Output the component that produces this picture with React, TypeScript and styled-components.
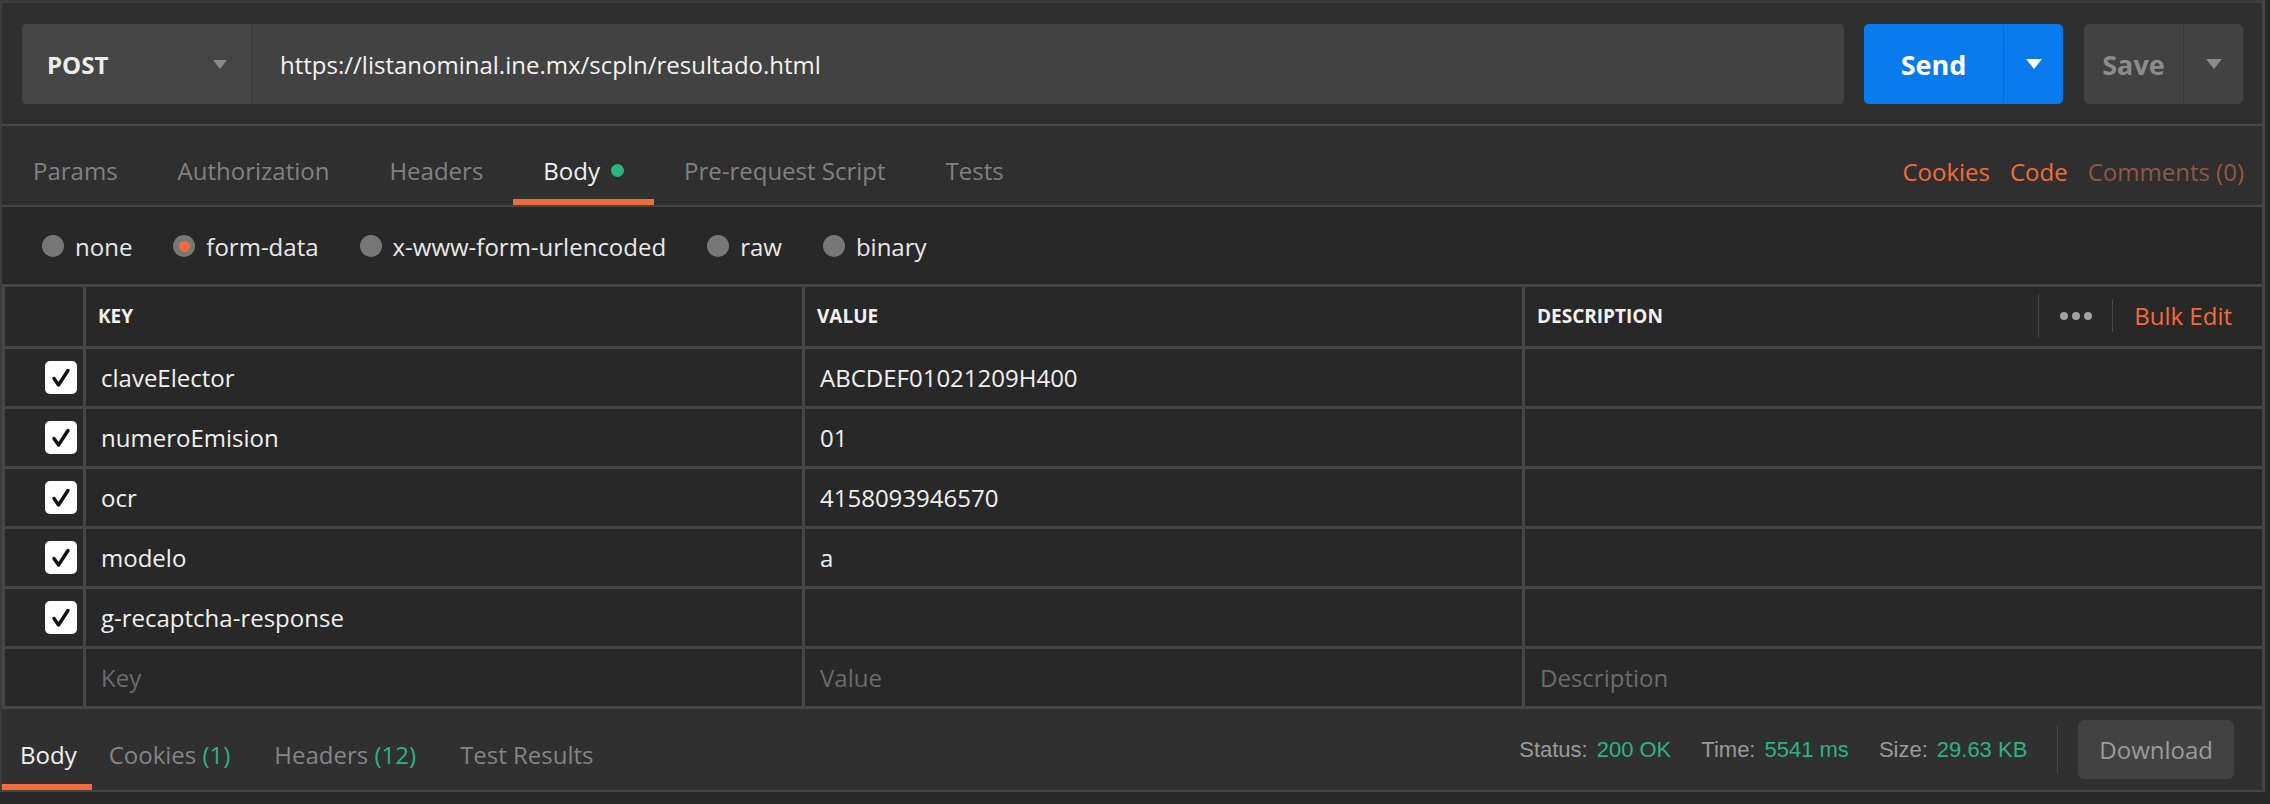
import styled, { createGlobalStyle } from 'styled-components'

const GlobalStyle = createGlobalStyle`
  html, body {
    margin: 0;
    padding: 0;
    background: #282828;
  }
  body {
    font-family: 'Open Sans', 'Noto Sans', sans-serif;
  }
  * {
    box-sizing: border-box;
  }
`

const ORANGE = '#f26b3a'
const GREEN = '#2bb381'

const Page = styled.div`
  width: 2270px;
  height: 804px;
  background: #282828;
  overflow: hidden;
`

const Panel = styled.div`
  width: 2265px;
  border-left: 2px solid #3c3c3c;
  border-right: 3px solid #454545;
`

/* ---------- request bar ---------- */

const TopBar = styled.div`
  height: 126px;
  display: flex;
  align-items: flex-start;
  padding: 21px 19px 0 20px;
  background: #2f2f2f;
  border-top: 3px solid #3d3d3d;
  border-bottom: 2px solid #474747;
`

const Method = styled.div`
  width: 230px;
  height: 80px;
  flex-shrink: 0;
  display: flex;
  align-items: center;
  justify-content: space-between;
  padding: 0 24px 0 25px;
  background: #454545;
  border-radius: 4px 0 0 4px;
  border-right: 1px solid #3b3b3b;
  color: #ededed;
  font-size: 24px;
  font-weight: 700;
`

const Caret = styled.span<{ $color: string; $w?: number }>`
  width: 0;
  height: 0;
  border-left: ${p => (p.$w ?? 14) / 2}px solid transparent;
  border-right: ${p => (p.$w ?? 14) / 2}px solid transparent;
  border-top: ${p => Math.round((p.$w ?? 14) * 0.65)}px solid ${p => p.$color};
`

const UrlInput = styled.div`
  flex: 1;
  height: 80px;
  display: flex;
  align-items: center;
  padding-left: 28px;
  margin-right: 20px;
  background: #424242;
  border-radius: 0 4px 4px 0;
  color: #f2f2f2;
  font-size: 24px;
`

const SplitButton = styled.div<{ $primary?: boolean; $width: number }>`
  width: ${p => p.$width}px;
  height: 80px;
  flex-shrink: 0;
  display: flex;
  border-radius: 5px;
  overflow: hidden;
  background: ${p => (p.$primary ? '#097bed' : '#424242')};
  color: ${p => (p.$primary ? '#ffffff' : '#8c8c8c')};
  font-size: 27px;
  font-weight: 700;
  & + & {
    margin-left: 21px;
  }
`

const SplitMain = styled.div`
  flex: 1;
  display: flex;
  align-items: center;
  justify-content: center;
`

const SplitArrow = styled.div<{ $primary?: boolean }>`
  width: 60px;
  display: flex;
  align-items: center;
  justify-content: center;
  border-left: 1px solid ${p => (p.$primary ? '#0a6cd0' : '#3a3a3a')};
`

/* ---------- request tabs ---------- */

const TabRow = styled.div`
  height: 81px;
  display: flex;
  padding-left: 1px;
  padding-right: 18px;
  background: #2f2f2f;
  border-bottom: 2px solid #454545;
`

const Tab = styled.div<{ $active?: boolean }>`
  display: flex;
  align-items: center;
  padding: 15px 30px 0;
  border-bottom: 6px solid ${p => (p.$active ? ORANGE : 'transparent')};
  color: ${p => (p.$active ? '#f0f0f0' : '#818181')};
  font-size: 24px;
`

const Dot = styled.span`
  width: 13px;
  height: 13px;
  margin-left: 11px;
  border-radius: 50%;
  background: ${GREEN};
`

const TabLinks = styled.div`
  margin-left: auto;
  display: flex;
  align-items: center;
  gap: 20px;
  padding-top: 12px;
  font-size: 24px;
`

const TabLink = styled.span<{ $dim?: boolean }>`
  color: ${p => (p.$dim ? '#8f5843' : ORANGE)};
`

/* ---------- body type radios ---------- */

const RadioRow = styled.div`
  height: 77px;
  display: flex;
  align-items: center;
  padding: 1px 0 0 40px;
  background: #282828;
`

const RadioItem = styled.label`
  display: flex;
  align-items: center;
  margin-right: 41px;
  color: #e8e8e8;
  font-size: 24px;
`

const RadioCircle = styled.span<{ $checked?: boolean }>`
  width: 22px;
  height: 22px;
  margin-right: 11px;
  display: flex;
  align-items: center;
  justify-content: center;
  border-radius: 50%;
  background: #777777;
  &::after {
    content: '';
    display: ${p => (p.$checked ? 'block' : 'none')};
    width: 11px;
    height: 11px;
    border-radius: 50%;
    background: ${ORANGE};
  }
`

/* ---------- key/value table ---------- */

const Table = styled.div`
  display: grid;
  grid-template-columns: 78px 716px 717px 1fr;
  grid-template-rows: 59px repeat(6, 57px);
  gap: 3px;
  padding: 3px 0 3px 3px;
  background: #454545;
`

const HeadCell = styled.div`
  display: flex;
  align-items: center;
  padding-left: 12px;
  padding-right: 30px;
  padding-bottom: 2px;
  background: #282828;
  color: #f2f2f2;
  font-size: 19px;
  font-weight: 700;
`

const Cell = styled.div<{ $placeholder?: boolean }>`
  display: flex;
  align-items: center;
  padding-left: 15px;
  background: #282828;
  color: ${p => (p.$placeholder ? '#6b6b6b' : '#f0f0f0')};
  font-size: 24px;
`

const CheckCell = styled.div`
  display: flex;
  align-items: center;
  justify-content: flex-end;
  padding-right: 6px;
  background: #282828;
`

const CheckBox = styled.span`
  width: 32px;
  height: 33px;
  display: flex;
  align-items: center;
  justify-content: center;
  border-radius: 5px;
  background: #ffffff;
`

const HeadTools = styled.div`
  margin-left: auto;
  display: flex;
  align-items: center;
`

const VSep = styled.span<{ $h: number }>`
  width: 1px;
  height: ${p => p.$h}px;
  background: #4a4a4a;
`

const Dots = styled.span`
  display: flex;
  gap: 4px;
  margin: 0 20px 0 21px;
  & > i {
    width: 8px;
    height: 8px;
    border-radius: 50%;
    background: #a0a0a0;
  }
`

const BulkEdit = styled.span`
  margin-left: 21px;
  color: ${ORANGE};
  font-size: 24px;
  font-weight: 400;
`

/* ---------- response bar ---------- */

const ResponseBar = styled.div`
  height: 83px;
  display: flex;
  background: #303030;
  border-bottom: 2px solid #454545;
`

const ResTab = styled.div<{ $active?: boolean }>`
  display: flex;
  align-items: center;
  padding: 15px 22px 0;
  border-bottom: 6px solid ${p => (p.$active ? ORANGE : 'transparent')};
  color: ${p => (p.$active ? '#f0f0f0' : '#848484')};
  font-size: 24px;
  white-space: pre;
  &:first-child {
    padding-left: 18px;
    padding-right: 15px;
  }
  &:nth-child(2) {
    padding-left: 17px;
  }
`

const Count = styled.span`
  color: ${GREEN};
`

const ResMeta = styled.div`
  margin-left: auto;
  display: flex;
  align-items: center;
  padding-right: 28px;
`

const Stat = styled.span`
  margin-right: 30px;
  color: #9a9a9a;
  font-family: 'Liberation Sans', Arial, sans-serif;
  font-size: 22px;
  & > b {
    margin-left: 9px;
    color: ${GREEN};
    font-weight: 400;
  }
`

const DownloadButton = styled.div`
  height: 59px;
  margin-left: 20px;
  padding: 0 21px;
  display: flex;
  align-items: center;
  border-radius: 6px;
  background: #424242;
  color: #9a9a9a;
  font-size: 24px;
`

const rows = [
  { key: 'claveElector', value: 'ABCDEF01021209H400' },
  { key: 'numeroEmision', value: '01' },
  { key: 'ocr', value: '4158093946570' },
  { key: 'modelo', value: 'a' },
  { key: 'g-recaptcha-response', value: '' },
]

const requestTabs = ['Params', 'Authorization', 'Headers', 'Body', 'Pre-request Script', 'Tests']
const bodyTypes = ['none', 'form-data', 'x-www-form-urlencoded', 'raw', 'binary']

const Check = () => (
  <svg width="22" height="22" viewBox="0 0 22 22">
    <path d="M4 11.5 L8.5 18 L18 3.5" fill="none" stroke="#111" strokeWidth="3.4" strokeLinecap="round" strokeLinejoin="round" />
  </svg>
)

export default function App() {
  return (
    <Page>
      <GlobalStyle />
      <Panel>
        <TopBar>
          <Method>
            POST
            <Caret $color="#8a8a8a" $w={14} />
          </Method>
          <UrlInput>https://listanominal.ine.mx/scpln/resultado.html</UrlInput>
          <SplitButton $primary $width={199}>
            <SplitMain>Send</SplitMain>
            <SplitArrow $primary>
              <Caret $color="#ffffff" $w={16} />
            </SplitArrow>
          </SplitButton>
          <SplitButton $width={159}>
            <SplitMain>Save</SplitMain>
            <SplitArrow>
              <Caret $color="#8a8a8a" $w={16} />
            </SplitArrow>
          </SplitButton>
        </TopBar>

        <TabRow>
          {requestTabs.map(t => (
            <Tab key={t} $active={t === 'Body'}>
              {t}
              {t === 'Body' && <Dot />}
            </Tab>
          ))}
          <TabLinks>
            <TabLink>Cookies</TabLink>
            <TabLink>Code</TabLink>
            <TabLink $dim>Comments (0)</TabLink>
          </TabLinks>
        </TabRow>

        <RadioRow>
          {bodyTypes.map(b => (
            <RadioItem key={b}>
              <RadioCircle $checked={b === 'form-data'} />
              {b}
            </RadioItem>
          ))}
        </RadioRow>

        <Table>
          <HeadCell />
          <HeadCell>KEY</HeadCell>
          <HeadCell>VALUE</HeadCell>
          <HeadCell>
            DESCRIPTION
            <HeadTools>
              <VSep $h={43} />
              <Dots>
                <i />
                <i />
                <i />
              </Dots>
              <VSep $h={33} />
              <BulkEdit>Bulk Edit</BulkEdit>
            </HeadTools>
          </HeadCell>
          {rows.map(r => (
            <>
              <CheckCell key={r.key + '-c'}>
                <CheckBox>
                  <Check />
                </CheckBox>
              </CheckCell>
              <Cell key={r.key + '-k'}>{r.key}</Cell>
              <Cell key={r.key + '-v'}>{r.value}</Cell>
              <Cell key={r.key + '-d'} />
            </>
          ))}
          <CheckCell />
          <Cell $placeholder>Key</Cell>
          <Cell $placeholder>Value</Cell>
          <Cell $placeholder>Description</Cell>
        </Table>

        <ResponseBar>
          <ResTab $active>Body</ResTab>
          <ResTab>
            Cookies <Count>(1)</Count>
          </ResTab>
          <ResTab>
            Headers <Count>(12)</Count>
          </ResTab>
          <ResTab>Test Results</ResTab>
          <ResMeta>
            <Stat>
              Status:<b>200 OK</b>
            </Stat>
            <Stat>
              Time:<b>5541 ms</b>
            </Stat>
            <Stat>
              Size:<b>29.63 KB</b>
            </Stat>
            <VSep $h={47} />
            <DownloadButton>Download</DownloadButton>
          </ResMeta>
        </ResponseBar>
      </Panel>
    </Page>
  )
}
